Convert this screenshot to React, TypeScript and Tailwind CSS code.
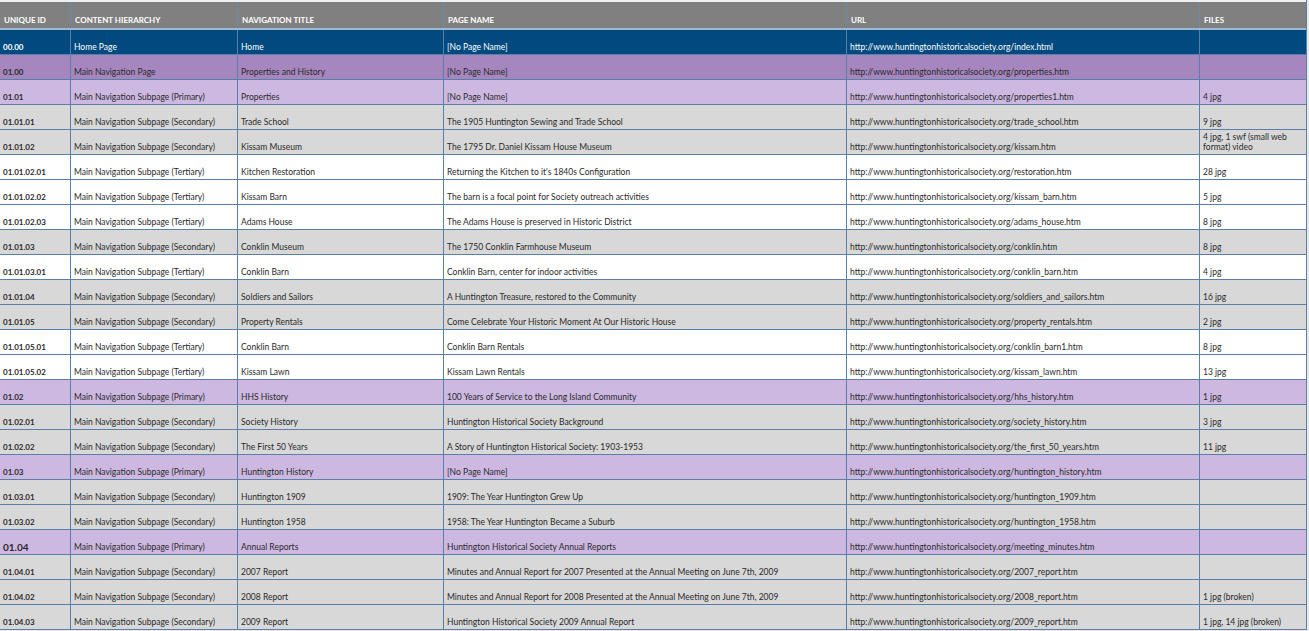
const rows: [string, string, string, string, string, string, string][] = [
  ["00.00","Home Page","Home","[No Page Name]","http://www.huntingtonhistoricalsociety.org/index.html","","b"],
  ["01.00","Main Navigation Page","Properties and History","[No Page Name]","http://www.huntingtonhistoricalsociety.org/properties.htm","","p"],
  ["01.01","Main Navigation Subpage (Primary)","Properties","[No Page Name]","http://www.huntingtonhistoricalsociety.org/properties1.htm","4 jpg","l"],
  ["01.01.01","Main Navigation Subpage (Secondary)","Trade School","The 1905 Huntington Sewing and Trade School","http://www.huntingtonhistoricalsociety.org/trade_school.htm","9 jpg","g"],
  ["01.01.02","Main Navigation Subpage (Secondary)","Kissam Museum","The 1795 Dr. Daniel Kissam House Museum","http://www.huntingtonhistoricalsociety.org/kissam.htm","4 jpg, 1 swf (small web format) video","g"],
  ["01.01.02.01","Main Navigation Subpage (Tertiary)","Kitchen Restoration","Returning the Kitchen to it's 1840s Configuration","http://www.huntingtonhistoricalsociety.org/restoration.htm","28 jpg","w"],
  ["01.01.02.02","Main Navigation Subpage (Tertiary)","Kissam Barn","The barn is a focal point for Society outreach activities","http://www.huntingtonhistoricalsociety.org/kissam_barn.htm","5 jpg","w"],
  ["01.01.02.03","Main Navigation Subpage (Tertiary)","Adams House","The Adams House is preserved in Historic District","http://www.huntingtonhistoricalsociety.org/adams_house.htm","8 jpg","w"],
  ["01.01.03","Main Navigation Subpage (Secondary)","Conklin Museum","The 1750 Conklin Farmhouse Museum","http://www.huntingtonhistoricalsociety.org/conklin.htm","8 jpg","g"],
  ["01.01.03.01","Main Navigation Subpage (Tertiary)","Conklin Barn","Conklin Barn, center for indoor activities","http://www.huntingtonhistoricalsociety.org/conklin_barn.htm","4 jpg","w"],
  ["01.01.04","Main Navigation Subpage (Secondary)","Soldiers and Sailors","A Huntington Treasure, restored to the Community","http://www.huntingtonhistoricalsociety.org/soldiers_and_sailors.htm","16 jpg","g"],
  ["01.01.05","Main Navigation Subpage (Secondary)","Property Rentals","Come Celebrate Your Historic Moment At Our Historic House","http://www.huntingtonhistoricalsociety.org/property_rentals.htm","2 jpg","g"],
  ["01.01.05.01","Main Navigation Subpage (Tertiary)","Conklin Barn","Conklin Barn Rentals","http://www.huntingtonhistoricalsociety.org/conklin_barn1.htm","8 jpg","w"],
  ["01.01.05.02","Main Navigation Subpage (Tertiary)","Kissam Lawn","Kissam Lawn Rentals","http://www.huntingtonhistoricalsociety.org/kissam_lawn.htm","13 jpg","w"],
  ["01.02","Main Navigation Subpage (Primary)","HHS History","100 Years of Service to the Long Island Community","http://www.huntingtonhistoricalsociety.org/hhs_history.htm","1 jpg","l"],
  ["01.02.01","Main Navigation Subpage (Secondary)","Society History","Huntington Historical Society Background","http://www.huntingtonhistoricalsociety.org/society_history.htm","3 jpg","g"],
  ["01.02.02","Main Navigation Subpage (Secondary)","The First 50 Years","A Story of Huntington Historical Society: 1903-1953","http://www.huntingtonhistoricalsociety.org/the_first_50_years.htm","11 jpg","g"],
  ["01.03","Main Navigation Subpage (Primary)","Huntington History","[No Page Name]","http://www.huntingtonhistoricalsociety.org/huntington_history.htm","","l"],
  ["01.03.01","Main Navigation Subpage (Secondary)","Huntington 1909","1909: The Year Huntington Grew Up","http://www.huntingtonhistoricalsociety.org/huntington_1909.htm","","g"],
  ["01.03.02","Main Navigation Subpage (Secondary)","Huntington 1958","1958: The Year Huntington Became a Suburb","http://www.huntingtonhistoricalsociety.org/huntington_1958.htm","","g"],
  ["01.04","Main Navigation Subpage (Primary)","Annual Reports","Huntington Historical Society Annual Reports","http://www.huntingtonhistoricalsociety.org/meeting_minutes.htm","","l"],
  ["01.04.01","Main Navigation Subpage (Secondary)","2007 Report","Minutes and Annual Report for 2007 Presented at the Annual Meeting on June 7th, 2009","http://www.huntingtonhistoricalsociety.org/2007_report.htm","","g"],
  ["01.04.02","Main Navigation Subpage (Secondary)","2008 Report","Minutes and Annual Report for 2008 Presented at the Annual Meeting on June 7th, 2009","http://www.huntingtonhistoricalsociety.org/2008_report.htm","1 jpg (broken)","g"],
  ["01.04.03","Main Navigation Subpage (Secondary)","2009 Report","Huntington Historical Society 2009 Annual Report","http://www.huntingtonhistoricalsociety.org/2009_report.htm","1 jpg, 14 jpg (broken)","g"],
];

const bg: Record<string, string> = {
  b: "bg-[#004a80] text-white",
  p: "bg-[#a686be] text-[#2a2a2a]",
  l: "bg-[#cdb8e1] text-[#2a2a2a]",
  g: "bg-[#d8d8d8] text-[#2a2a2a]",
  w: "bg-white text-[#2a2a2a]",
};

const widths = ["w-[70px]", "w-[167px]", "w-[206px]", "w-[403px]", "w-[353px]", "w-[108px]"];
const heads = ["UNIQUE ID", "CONTENT HIERARCHY", "NAVIGATION TITLE", "PAGE NAME", "URL", "FILES"];

export default function App() {
  return (
    <div className="w-[1309px] h-[631px] overflow-hidden bg-[#e8e8e8] text-[8.5px] leading-[10px]" style={{ fontFamily: "Lato, 'Open Sans', sans-serif" }}>
      <div className="w-[1307px] border-r border-[#5a7fa8]">
        <div className="flex h-[30px] bg-[#808080] border-t-2 border-[#f0f0f0] border-b-2 border-b-[#9fb7d0] text-white font-bold text-[8px]">
          {heads.map((h, i) => (
            <div key={h} className={`${widths[i]} shrink-0 flex items-end px-[4px] pb-[3px] ${i > 0 ? "border-l border-[#6a8aa8]" : ""}`}>{h}</div>
          ))}
        </div>
        {rows.map((r) => (
          <div key={r[0]} className={`flex h-[25px] border-b border-[#5a7fa8] ${bg[r[6]]}`}>
            {r.slice(0, 6).map((c, i) => (
              <div key={i} className={`${widths[i]} shrink-0 flex items-end px-[3px] pb-[2px] ${i > 0 ? "border-l border-[#5a7fa8]" : ""} ${i === 0 ? (r[0] === "01.04" ? "font-bold text-[10px]" : "font-bold text-[8px]") : ""}`}>
                <span className={i === 5 && c.length > 24 && c.includes("swf") ? "leading-[10px]" : ""}>{c}</span>
              </div>
            ))}
          </div>
        ))}
      </div>
    </div>
  );
}
